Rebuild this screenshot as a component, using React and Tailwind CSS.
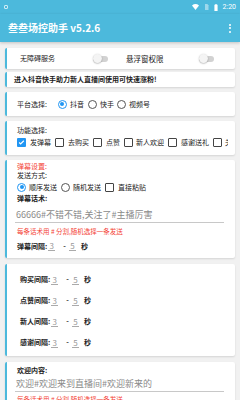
import React from 'react';

const BLUE = 'bg-[#4cb9dc]';

function Card({ className = '', children }) {
  return (
    <div className={`bg-white rounded-[2px] border-l-[2px] border-[#4cb9dc] shadow-[0_1px_2px_rgba(0,0,0,0.12)] ${className}`}>
      {children}
    </div>
  );
}

function Toggle() {
  return (
    <div className="relative w-[16px] h-[9px] flex items-center">
      <div className="w-[15px] h-[6px] rounded-full bg-[#d2d2d2]" />
      <div className="absolute left-0 top-0 w-[9px] h-[9px] rounded-full bg-[#f4f4f4] shadow-[0_0.5px_1.5px_rgba(0,0,0,0.35)]" />
    </div>
  );
}

function Radio({ checked }) {
  return checked ? (
    <span className="w-[9px] h-[9px] rounded-full border-[1.2px] border-[#2196f3] flex items-center justify-center shrink-0">
      <span className="w-[4px] h-[4px] rounded-full bg-[#2196f3]" />
    </span>
  ) : (
    <span className="w-[9px] h-[9px] rounded-full border-[1.2px] border-[#555] shrink-0" />
  );
}

function Check({ checked }) {
  return checked ? (
    <span className="w-[9px] h-[9px] rounded-[1px] bg-[#2196f3] flex items-center justify-center shrink-0">
      <svg width="7" height="7" viewBox="0 0 24 24" fill="none" stroke="white" strokeWidth="4">
        <path d="M4 12l5 5L20 6" />
      </svg>
    </span>
  ) : (
    <span className="w-[9px] h-[9px] rounded-[1px] border-[1.2px] border-[#444] shrink-0" />
  );
}

function Interval({ label }) {
  return (
    <div className="flex items-center h-full">
      <span className="text-[7px] font-bold text-[#222] leading-none">{label}</span>
      <span className="ml-[1px] w-[7px] border-b border-[#aaa] text-[8px] text-[#999] leading-[9px] text-center">3</span>
      <span className="ml-[8px] text-[7px] font-bold text-[#333] leading-none">-</span>
      <span className="ml-[3px] w-[7px] border-b border-[#aaa] text-[8px] text-[#999] leading-[9px] text-center">5</span>
      <span className="ml-[5px] text-[7px] font-bold text-[#222] leading-none">秒</span>
    </div>
  );
}

export default function App() {
  return (
    <div className="w-[240px] h-[400px] overflow-hidden bg-[#f1f1f1] font-['Noto_Sans_CJK_SC','Noto_Sans',sans-serif] text-[#222]">
      <div className={`${BLUE} h-[14px] flex items-center px-[4px]`}>
        <span className="w-[4px] h-[4px] border border-white/70 rounded-[1px]" />
        <div className="ml-auto flex items-center gap-[5px]">
          <svg width="7" height="6" viewBox="0 0 24 20"><path d="M12 20L0 5a19 19 0 0124 0z" fill="white" /></svg>
          <svg width="5" height="6" viewBox="0 0 20 24"><path d="M4 0h9l5 5v19H4z" fill="white" opacity="0.45" /></svg>
          <svg width="4" height="7" viewBox="0 0 12 22"><path d="M4 0h4v2h3v20H1V2h3z" fill="white" /></svg>
          <span className="text-white text-[7px] font-['Roboto',sans-serif] leading-none">2:20</span>
        </div>
      </div>
      <div className={`${BLUE} h-[28px] flex items-center justify-between pl-[8px] pr-[9px] shadow-[0_1px_3px_rgba(0,0,0,0.2)]`}>
        <span className="text-white text-[10px] font-bold leading-none">叁叁场控助手 v5.2.6</span>
        <div className="flex flex-col gap-[1.5px]">
          <span className="w-[2px] h-[2px] bg-white rounded-full" />
          <span className="w-[2px] h-[2px] bg-white rounded-full" />
          <span className="w-[2px] h-[2px] bg-white rounded-full" />
        </div>
      </div>

      <div className="px-[5px] flex flex-col">
        <Card className="mt-[6px] h-[21px] flex items-center">
          <span className="ml-[13px] text-[7px] leading-none">无障碍服务</span>
          <div className="ml-[38px]"><Toggle /></div>
          <span className="ml-[17px] text-[7.5px] leading-none">悬浮窗权限</span>
          <div className="ml-[35px]"><Toggle /></div>
        </Card>

        <Card className="mt-[3px] h-[15px] flex items-center">
          <span className="ml-[7px] text-[7px] font-bold leading-none">进入抖音快手助力新人直播间使用可快速涨粉!</span>
        </Card>

        <Card className="mt-[5px] h-[24px] flex items-center">
          <span className="ml-[10px] text-[7px] leading-none">平台选择:</span>
          <div className="ml-[11px] flex items-center">
            <Radio checked />
            <span className="ml-[3px] text-[7px] leading-none">抖音</span>
            <span className="ml-[4px]" />
            <Radio />
            <span className="ml-[3px] text-[7px] leading-none">快手</span>
            <span className="ml-[3px]" />
            <Radio />
            <span className="ml-[3px] text-[7px] leading-none">视频号</span>
          </div>
        </Card>

        <Card className="mt-[5px] h-[34px] flex flex-col pl-[10px] pt-[5px]">
          <span className="text-[7px] leading-[9px]">功能选择:</span>
          <div className="mt-[2px] w-[211px] overflow-hidden flex items-center h-[11px] whitespace-nowrap">
            <Check checked />
            <span className="ml-[4px] text-[7px] leading-none">发弹幕</span>
            <span className="ml-[4px]" />
            <Check />
            <span className="ml-[4px] text-[7px] leading-none">去购买</span>
            <span className="ml-[4px]" />
            <Check />
            <span className="ml-[4px] text-[7px] leading-none">点赞</span>
            <span className="ml-[4px]" />
            <Check />
            <span className="ml-[3px] text-[7px] leading-none">新人欢迎</span>
            <span className="ml-[4px]" />
            <Check />
            <span className="ml-[4px] text-[7px] leading-none">感谢送礼</span>
            <span className="ml-[4px]" />
            <Check />
            <span className="ml-[3px] text-[7px] leading-none">关注</span>
          </div>
        </Card>

        <Card className="mt-[5px] h-[98px] flex flex-col pl-[10px] pt-[2px]">
          <span className="text-[7px] leading-[9px] text-[#f44336]">弹幕设置:</span>
          <span className="text-[7px] leading-[9px]">发送方式:</span>
          <div className="h-[14px] flex items-center">
            <Radio checked />
            <span className="ml-[3px] text-[7px] leading-none">顺序发送</span>
            <span className="ml-[4px]" />
            <Radio />
            <span className="ml-[3px] text-[7px] leading-none">随机发送</span>
            <span className="ml-[4px]" />
            <Check />
            <span className="ml-[4px] text-[7px] leading-none">直接粘贴</span>
          </div>
          <span className="text-[7px] leading-[9px] font-bold">弹幕话术:</span>
          <div className="h-[20px] w-[209px] -ml-[2px] border-b-[1.5px] border-[#c8c8c8] flex items-end pb-[3px] pl-[1px]">
            <span className="text-[9px] leading-none text-[#8a8a8a]">66666#不错不错,关注了#主播厉害</span>
          </div>
          <span className="mt-[4px] text-[6.5px] leading-[8px] text-[#f44336]">每条话术用 # 分割,随机选择一条发送</span>
          <div className="mt-[4px] h-[14px]">
            <Interval label="弹幕间隔:" />
          </div>
        </Card>

        <Card className="mt-[6px] h-[92px] flex flex-col pl-[13px] pt-[5px]">
          <div className="h-[21px]"><Interval label="购买间隔:" /></div>
          <div className="h-[21px]"><Interval label="点赞间隔:" /></div>
          <div className="h-[21px]"><Interval label="新人间隔:" /></div>
          <div className="h-[21px]"><Interval label="感谢间隔:" /></div>
        </Card>

        <Card className="mt-[6px] h-[60px] flex flex-col pl-[10px] pt-[4px]">
          <span className="text-[7px] leading-[9px] font-bold">欢迎内容:</span>
          <div className="h-[17px] w-[209px] -ml-[2px] border-b-[1.5px] border-[#c8c8c8] flex items-end pb-[3px] pl-[1px]">
            <span className="text-[9px] leading-none text-[#8a8a8a]">欢迎#欢迎来到直播间#欢迎新来的</span>
          </div>
          <span className="mt-[3px] text-[6.5px] leading-[8px] text-[#f44336]">每条话术用 # 分割,随机选择一条发送</span>
        </Card>
      </div>
    </div>
  );
}
